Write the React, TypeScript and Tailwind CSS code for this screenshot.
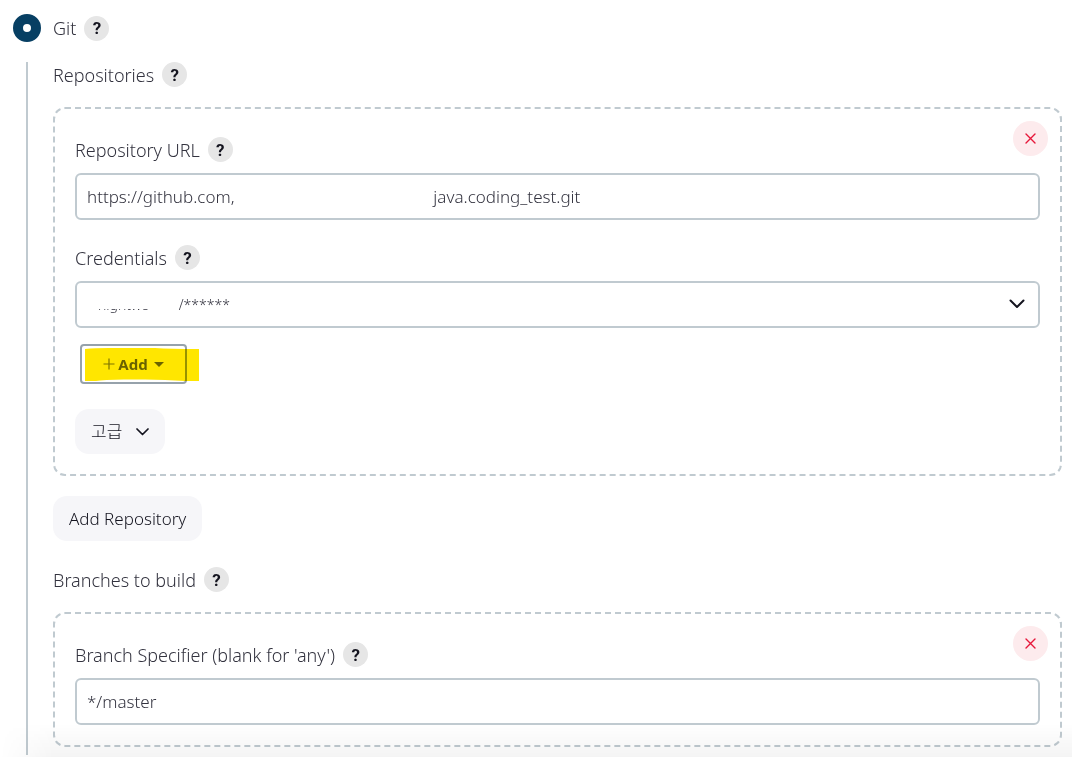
import React from 'react'

const repositoryUrl = 'https://github.com,' + ' '.repeat(45) + 'java.coding_test.git'

const fieldStyle = 'block w-full h-[47px] rounded-md border-2 border-[#c0cad0] bg-white px-2.5 text-[#33333f]'
const grayButton = 'flex items-center h-[45px] rounded-[14px] bg-[#f6f6f9] px-4 text-[17px] text-[#14141f]'

const Help: React.FC<{ topic: string }> = ({ topic }) => {
    return (
        <button
            type="button"
            aria-label={`Help for feature: ${topic}`}
            className="flex items-center justify-center w-[25px] h-[25px] rounded-full bg-[#e6e6e6] font-[Roboto,sans-serif] text-[17px] font-bold text-[#14141f]"
        >
            ?
        </button>
    )
}

const FieldLabel: React.FC<{ text: string; htmlFor?: string }> = ({ text, htmlFor }) => {
    return (
        <div className="flex items-center gap-2 h-[25px]">
            {htmlFor ? <label htmlFor={htmlFor}>{text}</label> : <span>{text}</span>}
            <Help topic={text} />
        </div>
    )
}

const DeleteButton: React.FC = () => {
    return (
        <button
            type="button"
            aria-label="Delete"
            className="absolute top-3 right-3 flex items-center justify-center w-[35px] h-[35px] rounded-full bg-[#fdebed]"
        >
            <svg width="11" height="11" viewBox="0 0 11 11" fill="none" stroke="#e6173a" strokeWidth="1.4" strokeLinecap="round">
                <path d="M1 1 10 10M10 1 1 10" />
            </svg>
        </button>
    )
}

const Chunk: React.FC<{ children: React.ReactNode }> = ({ children }) => {
    return (
        <div className="relative mt-5 rounded-xl border-2 border-dashed border-[#c0cad0] px-5 pt-7 pb-5">
            <DeleteButton />
            {children}
        </div>
    )
}

const App: React.FC = () => {
    return (
        <main className="relative min-h-screen overflow-hidden bg-white pt-3.5 pr-2.5 pb-2.5 font-['Noto_Sans','Noto_Sans_CJK_KR',sans-serif] text-[18px] leading-6 font-light text-[#33333f]">
            <div className="flex items-center pl-[13px] h-7">
                <input
                    id="scm-git"
                    type="radio"
                    name="scm"
                    defaultChecked
                    className="appearance-none w-7 h-7 rounded-full border-[10px] border-[#073f63] bg-white"
                />
                <label htmlFor="scm-git" className="ml-3 mr-2">Git</label>
                <Help topic="Git" />
            </div>

            <section className="mt-5 ml-[26px] border-l-2 border-[#c0cad0] pl-[25px] pb-2">
                <FieldLabel text="Repositories" />
                <Chunk>
                    <FieldLabel text="Repository URL" htmlFor="repo-url" />
                    <input id="repo-url" type="text" defaultValue={repositoryUrl} className={`${fieldStyle} text-[17px] mt-[11px] mb-[25px]`} />

                    <FieldLabel text="Credentials" htmlFor="credentials" />
                    <div className="relative mt-[11px]">
                        <select id="credentials" className={`${fieldStyle} appearance-none text-sm`}>
                            <option>&nbsp;&nbsp;&nbsp;nightwo&nbsp;&nbsp;&nbsp;&nbsp;&nbsp;&nbsp;&nbsp;&nbsp;/******</option>
                        </select>
                        <div className="pointer-events-none absolute top-2.5 left-2.5 w-[90px] h-[18px] bg-white" />
                        <svg className="pointer-events-none absolute top-[18px] right-[15px]" width="16" height="10" viewBox="0 0 16 10" fill="none" stroke="#14141f" strokeWidth="2" strokeLinecap="round" strokeLinejoin="round">
                            <path d="M1.5 1.5 8 8 14.5 1.5" />
                        </svg>
                    </div>

                    <div className="relative mt-4 ml-[5px] w-fit">
                        <button
                            type="button"
                            className="flex items-center justify-center w-[107px] h-10 rounded border-2 border-[#96a2ab] bg-white text-[15px] font-bold text-[#6a6e74]"
                        >
                            <svg className="mr-[3px]" width="12" height="12" viewBox="0 0 12 12" stroke="#7d8084" strokeWidth="1.2">
                                <path d="M6 0.5V11.5M0.5 6H11.5" />
                            </svg>
                            Add
                            <svg className="ml-1.5" width="10" height="5" viewBox="0 0 10 5" fill="#6a6e74">
                                <path d="M0 0H10L5 5Z" />
                            </svg>
                        </button>
                        {/* highlighter stroke */}
                        <svg className="pointer-events-none absolute top-1 left-[5px] mix-blend-multiply" width="115" height="33" viewBox="0 0 115 33" fill="#ffe600">
                            <path d="M0 1Q10 0 24 0H70Q85 1 114 1V33H100Q75 31 50 31.500Q20 31 11 33H0Z" />
                        </svg>
                    </div>

                    <button type="button" className={`${grayButton} mt-[25px] gap-3.5`}>
                        고급
                        <svg width="13" height="8" viewBox="0 0 13 8" fill="none" stroke="#14141f" strokeWidth="1.7" strokeLinecap="round" strokeLinejoin="round">
                            <path d="M1 1 6.500 6.500 12 1" />
                        </svg>
                    </button>
                </Chunk>

                <button type="button" className={`${grayButton} mt-5 mb-[26px]`}>Add Repository</button>

                <FieldLabel text="Branches to build" />
                <Chunk>
                    <FieldLabel text="Branch Specifier (blank for 'any')" htmlFor="branch" />
                    <input id="branch" type="text" defaultValue="*/master" className={`${fieldStyle} text-[17px] mt-[11px]`} />
                </Chunk>
            </section>

            {/* shadow of the sticky button bar */}
            <div className="pointer-events-none absolute inset-x-0 bottom-0.5 h-10 bg-linear-to-b from-transparent to-black/5 mask-l-from-95%" />
        </main>
    )
}

export default App
